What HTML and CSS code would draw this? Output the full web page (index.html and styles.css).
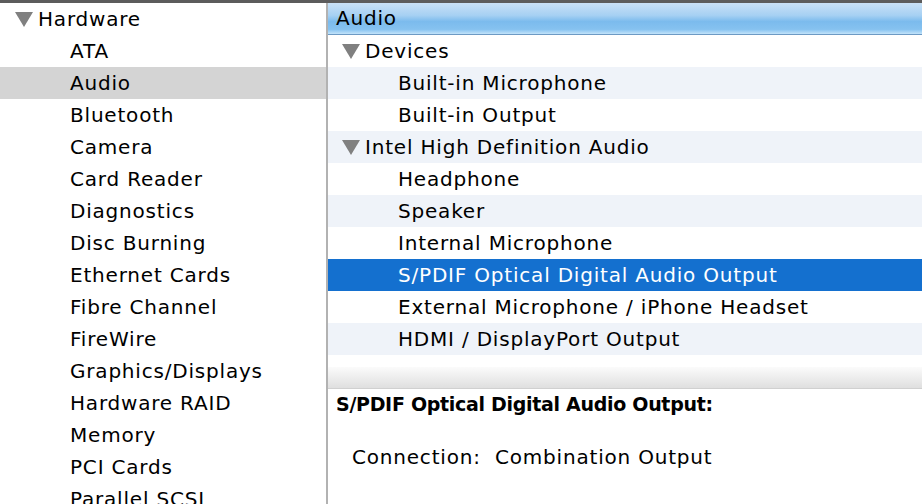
FILE: index.html
```html
<!DOCTYPE html>
<html lang="en">
<head>
    <meta charset="UTF-8">
    <title>System Information - Audio</title>
    <link rel="stylesheet" href="styles.css">
</head>
<body>
    <div class="topbar"></div>
    <div class="window">
        <!-- Left: category tree -->
        <div class="sidebar">
            <div class="row group"><span class="tri"></span>Hardware</div>
            <div class="row item">ATA</div>
            <div class="row item selected">Audio</div>
            <div class="row item">Bluetooth</div>
            <div class="row item">Camera</div>
            <div class="row item">Card Reader</div>
            <div class="row item">Diagnostics</div>
            <div class="row item">Disc Burning</div>
            <div class="row item">Ethernet Cards</div>
            <div class="row item">Fibre Channel</div>
            <div class="row item">FireWire</div>
            <div class="row item">Graphics/Displays</div>
            <div class="row item">Hardware RAID</div>
            <div class="row item">Memory</div>
            <div class="row item">PCI Cards</div>
            <div class="row item">Parallel SCSI</div>
        </div>

        <div class="divider"></div>

        <!-- Right: device list and details -->
        <div class="content">
            <div class="header">Audio</div>
            <div class="list">
                <div class="row group"><span class="tri"></span>Devices</div>
                <div class="row item alt">Built-in Microphone</div>
                <div class="row item">Built-in Output</div>
                <div class="row group alt"><span class="tri"></span>Intel High Definition Audio</div>
                <div class="row item">Headphone</div>
                <div class="row item alt">Speaker</div>
                <div class="row item">Internal Microphone</div>
                <div class="row item active">S/PDIF Optical Digital Audio Output</div>
                <div class="row item">External Microphone / iPhone Headset</div>
                <div class="row item alt">HDMI / DisplayPort Output</div>
            </div>
            <div class="splitter"></div>
            <div class="details">
                <div class="details-title">S/PDIF Optical Digital Audio Output:</div>
                <div class="details-line">Connection:&nbsp;&nbsp;Combination Output</div>
            </div>
        </div>
    </div>
</body>
</html>
```

FILE: styles.css
```css
/* Basic layout */
html, body {
    margin: 0;
    height: 100%;
    overflow: hidden;
}

body {
    font-family: "DejaVu Sans", "Liberation Sans", sans-serif;
    font-size: 20px;
    letter-spacing: 0.8px;
    color: #000;
    background-color: #fff;
}

.topbar {
    height: 3px;
    background-color: #5c5c5c;
}

.window {
    display: flex;
    height: 501px;
}

.sidebar {
    width: 326px;
    flex-shrink: 0;
    background-color: #fff;
}

.divider {
    width: 2px;
    background-color: #b2b2b2;
}

.content {
    flex: 1;
    display: flex;
    flex-direction: column;
}

/* Rows */
.row {
    height: 32px;
    line-height: 32px;
    white-space: nowrap;
    display: flex;
    align-items: center;
}

.sidebar .group {
    padding-left: 15px;
}

.sidebar .item {
    padding-left: 70px;
}

.sidebar .selected {
    background-color: #d4d4d4;
}

.list .group {
    padding-left: 14px;
}

.list .item {
    padding-left: 70px;
}

.alt {
    background-color: #eff3f9;
}

.active {
    background-color: #1470cf;
    color: #fff;
}

.tri {
    width: 0;
    height: 0;
    border-left: 9px solid transparent;
    border-right: 9px solid transparent;
    border-top: 15px solid #808080;
    margin-right: 5px;
}

/* Blue column header */
.header {
    height: 31px;
    line-height: 31px;
    padding-left: 8px;
    border-bottom: 1px solid #6d9ac4;
    background: linear-gradient(#c9e1f6 0%, #a6d0f3 40%, #7bbbed 60%, #86c2f0 85%, #c2e3fa 100%);
}

.list {
    height: 332px;
}

.splitter {
    height: 21px;
    background: linear-gradient(#fbfbfb, #dfdfdf);
    border-bottom: 1px solid #d0d0d0;
}

/* Detail pane */
.details {
    padding: 3px 8px;
}

.details-title {
    font-size: 19px;
    font-weight: bold;
    letter-spacing: -0.3px;
    line-height: 24px;
}

.details-line {
    margin-top: 29px;
    padding-left: 16px;
    line-height: 24px;
}
```
